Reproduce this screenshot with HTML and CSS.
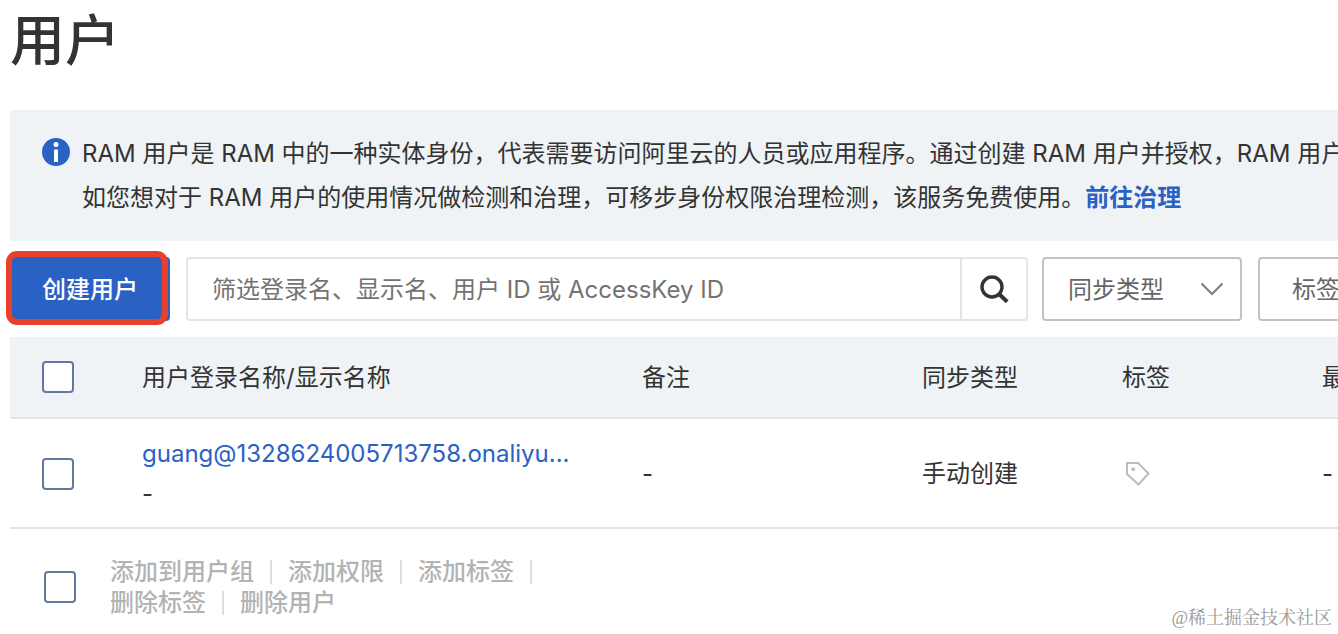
FILE: index.html
```html
<!DOCTYPE html>
<html lang="zh-CN">
<head>
<meta charset="utf-8">
<title>用户</title>
<meta name="viewport" content="width=device-width, initial-scale=1">
<link rel="stylesheet" href="styles.css">
</head>
<body>
<main class="page">
  <h1 class="title">用户</h1>

  <section class="notice">
    <svg class="notice-icon" viewBox="0 0 28 28" aria-hidden="true">
      <circle cx="14" cy="14" r="14" fill="#2a62c4"/>
      <circle cx="14" cy="6.5" r="2.5" fill="#fff"/>
      <path d="M12 11.5h4V24h-4z" fill="#fff"/>
    </svg>
    <div class="notice-text">
      <p>RAM 用户是 RAM 中的一种实体身份，代表需要访问阿里云的人员或应用程序。通过创建 RAM 用户并授权，RAM 用户</p>
      <p>如您想对于 RAM 用户的使用情况做检测和治理，可移步身份权限治理检测，该服务免费使用。<a class="notice-link" href="#">前往治理</a></p>
    </div>
  </section>

  <div class="toolbar">
    <div class="create">
      <button class="create-button" type="button">创建用户</button>
      <span class="highlight"></span>
    </div>
    <form class="search">
      <input class="search-input" type="text" aria-label="筛选用户" placeholder="筛选登录名、显示名、用户 ID 或 AccessKey ID">
      <button class="search-button" type="button" aria-label="搜索">
        <svg class="search-icon" viewBox="0 0 30 30" fill="none" stroke="#333" stroke-width="3.4">
          <circle cx="13" cy="13" r="10"/>
          <path d="M20 20l8.2 7.8" stroke-width="4"/>
        </svg>
      </button>
    </form>
    <div class="type-filter">
      <select class="type-select" aria-label="同步类型">
        <option>同步类型</option>
      </select>
      <svg class="chevron" viewBox="0 0 24 14" fill="none" stroke="#808080" stroke-width="2.2" aria-hidden="true">
        <path d="M1.5 1.5L12 12 22.500 1.500"/>
      </svg>
    </div>
    <button class="tag-filter" type="button">标签</button>
  </div>

  <table class="users">
    <colgroup>
      <col class="col-check"><col class="col-name"><col class="col-note"><col class="col-short"><col class="col-short"><col class="col-short">
    </colgroup>
    <thead>
      <tr>
        <th><input class="check" type="checkbox" aria-label="全选"></th>
        <th class="label">用户登录名称/显示名称</th>
        <th class="label">备注</th>
        <th class="label">同步类型</th>
        <th class="label">标签</th>
        <th class="label">最</th>
      </tr>
    </thead>
    <tbody>
      <tr>
        <td><input class="check" type="checkbox" aria-label="选择用户"></td>
        <td><a class="user-link" href="#">guang@1328624005713758.onaliyu...</a><div>-</div></td>
        <td>-</td>
        <td>手动创建</td>
        <td>
          <svg class="tag-icon" viewBox="0 0 26 26" fill="none" stroke="#bcbcbc" stroke-width="2" aria-hidden="true">
            <path d="M2 2h11l10.500 10.500L13.500 23.500 2 13z"/>
            <circle cx="8.200" cy="8.200" r="1.900" fill="#bcbcbc" stroke="none"/>
          </svg>
        </td>
        <td>-</td>
      </tr>
    </tbody>
  </table>

  <div class="batch">
    <input class="check" type="checkbox" aria-label="批量选择">
    <div class="batch-actions">
      <button class="batch-action" type="button" disabled>添加到用户组</button>
      <button class="batch-action" type="button" disabled>添加权限</button>
      <button class="batch-action" type="button" disabled>添加标签</button>
      <button class="batch-action" type="button" disabled>删除标签</button>
      <button class="batch-action" type="button" disabled>删除用户</button>
    </div>
  </div>
  <div class="watermark">@稀土掘金技术社区</div>
</main>
</body>
</html>
```
FILE: styles.css
```css
* {
  box-sizing: border-box;
}

body {
  margin: 0;
  background: #fff;
  color: #333;
  font: 24px/40px Inter, "Noto Sans CJK SC", sans-serif;
}

button,
input,
select {
  margin: 0;
  font: inherit;
  color: inherit;
}

a {
  color: #2a62c4;
  text-decoration: none;
}

p {
  margin: 0;
}

.page {
  position: relative;
  min-height: 100vh;
  padding-left: 10px;
  overflow: hidden;
}

.title {
  margin: 0 0 30px;
  font-size: 55px;
  line-height: 80px;
  font-weight: 500;
}

.notice {
  display: flex;
  gap: 12px;
  padding: 22px 0 21px 32px;
  overflow: hidden;
  border-radius: 4px 0 0 4px;
  background: #eff3f6;
}

.notice-icon {
  flex: none;
  width: 28px;
  height: 28px;
  margin-top: 6px;
}

.notice-text {
  line-height: 44px;
  white-space: nowrap;
}

.notice-link {
  font-weight: 700;
}

.toolbar {
  display: flex;
  gap: 16px;
  height: 64px;
  margin: 16px 0;
}

.create {
  position: relative;
  flex: none;
  width: 160px;
}

.create-button {
  width: 100%;
  height: 100%;
  padding: 2px 0 0;
  border: 0;
  border-radius: 4px;
  background: #2a62c4;
  color: #fff;
  font-weight: 500;
}

.highlight {
  position: absolute;
  inset: -6px 2px -4px -4px;
  border: 6px solid #e8402a;
  border-radius: 11px;
  pointer-events: none;
}

.search {
  display: flex;
  flex: 1;
  min-width: 0;
  margin-right: -2px;
  border: 2px solid #e3e4e6;
  border-radius: 4px;
}

.search-input {
  flex: 1;
  min-width: 0;
  padding: 2px 24px 0;
  border: 0;
  background: none;
}

.search-input::placeholder {
  color: #737373;
  opacity: 1;
}

.search-button {
  display: grid;
  place-items: center;
  width: 66px;
  padding: 0;
  border: 0;
  border-left: 2px solid #e3e4e6;
  background: none;
}

.search-icon {
  width: 30px;
  height: 30px;
}

.type-filter {
  position: relative;
  flex: none;
  width: 200px;
}

.type-select,
.tag-filter {
  height: 100%;
  border: 2px solid #c0c2c4;
  border-radius: 4px;
  background: #fff;
  color: #666;
}

.type-select {
  width: 100%;
  padding: 2px 24px 0;
  appearance: none;
}

.chevron {
  position: absolute;
  top: 25px;
  right: 18px;
  width: 24px;
  height: 14px;
  pointer-events: none;
}

.tag-filter {
  flex: none;
  width: 200px;
  margin-right: -120px;
  padding: 2px 32px 0;
  text-align: left;
}

.users {
  width: 1480px;
  table-layout: fixed;
  border-collapse: separate;
  border-spacing: 0;
}

.col-check {
  width: 100px;
}

.col-name {
  width: 500px;
}

.col-note {
  width: 280px;
}

.col-short {
  width: 200px;
}

.users th,
.users td {
  padding: 0 0 0 32px;
  border-bottom: 2px solid #e3e4e6;
  text-align: left;
  vertical-align: middle;
  font-weight: 400;
}

.users th {
  height: 82px;
  background: #eff3f6;
}

.users td {
  height: 110px;
}

.users td,
.users .label {
  padding-top: 2px;
}

.check {
  display: block;
  flex: none;
  width: 32px;
  height: 32px;
  border: 2px solid #64779d;
  border-radius: 4px;
  background: #fff;
  appearance: none;
}

.tag-icon {
  display: block;
  width: 26px;
  height: 26px;
  margin-left: 3px;
}

.batch {
  display: flex;
  align-items: center;
  gap: 34px;
  padding: 27px 0 0 34px;
}

.batch-actions {
  display: flex;
  flex-wrap: wrap;
  width: 440px;
}

.batch-action {
  display: flex;
  align-items: center;
  padding: 0;
  border: 0;
  background: none;
  color: #b3b3b3;
  font-weight: 500;
  line-height: 31px;
}

.batch-action:not(:last-child)::after {
  width: 2px;
  height: 24px;
  margin: 0 16px;
  background: #dedede;
  content: "";
}

.watermark {
  position: absolute;
  right: 6px;
  bottom: 4px;
  color: #999;
  font: 18px/24px "Liberation Serif", "Noto Serif CJK SC", "Noto Sans CJK SC", serif;
}
```
